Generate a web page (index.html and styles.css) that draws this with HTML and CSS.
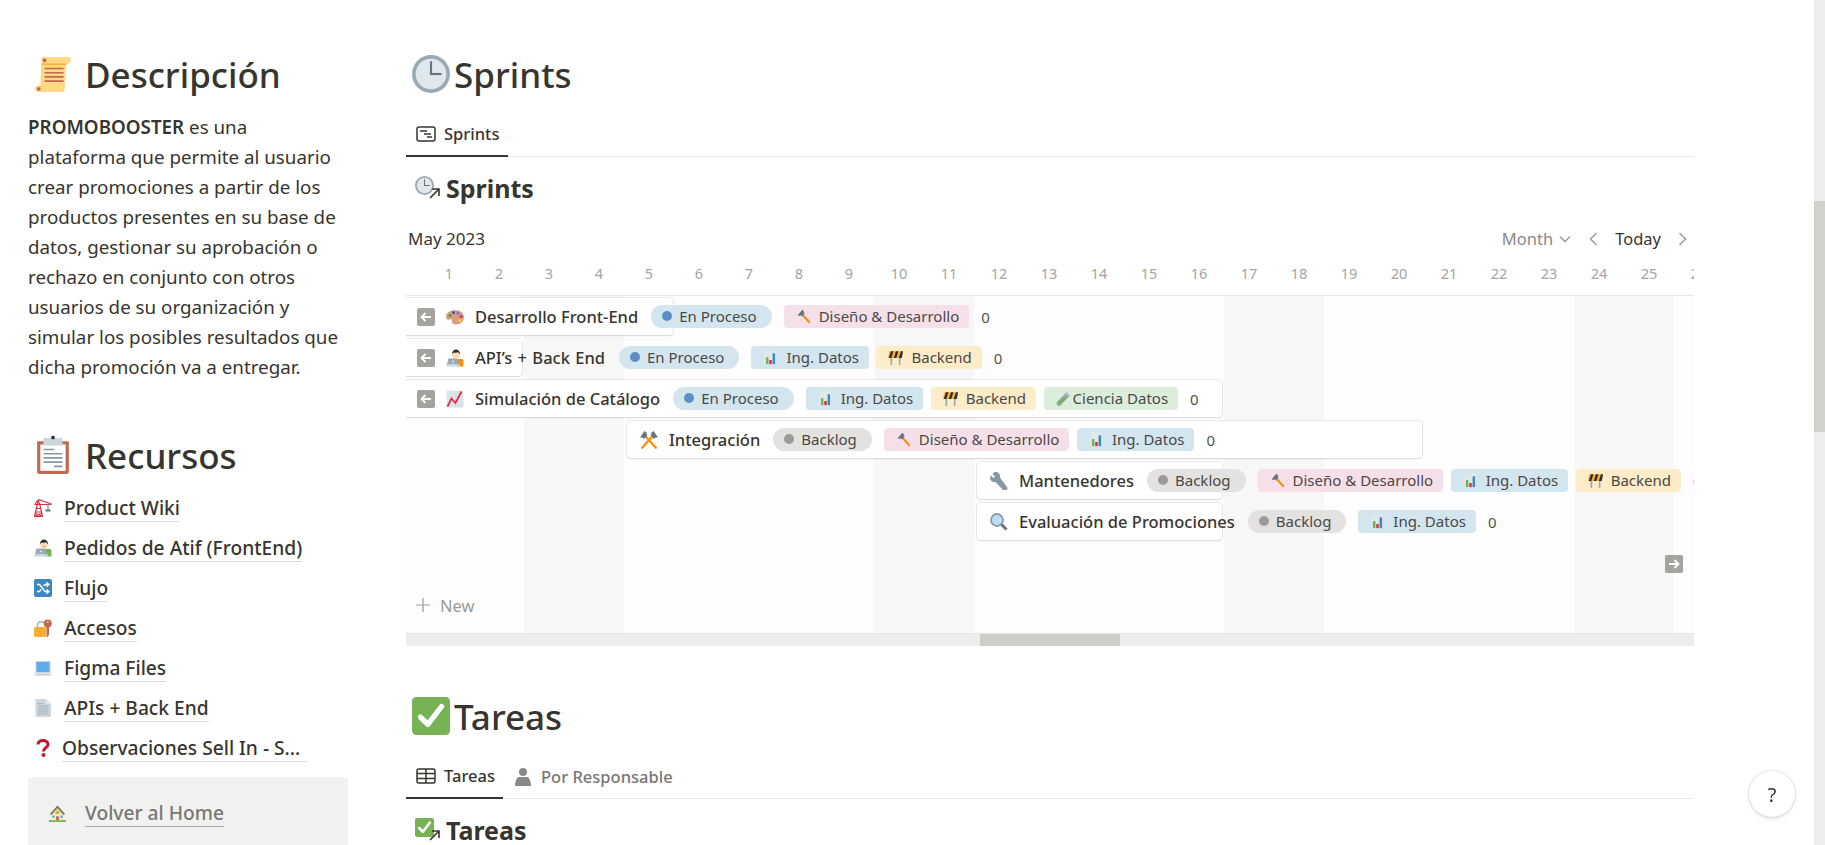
FILE: index.html
```html
<!DOCTYPE html>
<html lang="es">
<head>
<meta charset="utf-8">
<title>Promobooster</title>
<link rel="stylesheet" href="styles.css">
</head>
<body>
<svg class="sprite" xmlns="http://www.w3.org/2000/svg">
  <symbol id="i-scroll" viewBox="0 0 36 36">
    <path fill="#FFD983" d="M8 2h24a3 3 0 0 1 3 3c0 2-1.5 3-3 3h-1.5L29 32a3 3 0 0 1-3 3H4a3 3 0 0 1-3-3c0-2 1.5-3 3-3h2L7 5a3 3 0 0 1 1-3z"/>
    <path fill="#FFAC33" d="M8 8h23v1.5H8z"/>
    <path fill="#C1694F" d="M10 12h18v1.5H10zM10 16h18v1.5H10zM10 20h18v1.5H10zM10 24h18v1.5H10z"/>
    <circle cx="10" cy="5" r="1.8" fill="#C1694F"/><circle cx="4.5" cy="32" r="1.8" fill="#C1694F"/>
  </symbol>
  <symbol id="i-clip" viewBox="0 0 36 36">
    <path fill="#C1694F" d="M4 5h28a1 1 0 0 1 1 1v28a2 2 0 0 1-2 2H5a2 2 0 0 1-2-2V6a1 1 0 0 1 1-1z"/>
    <path fill="#fff" d="M6 8h24v25H6z"/>
    <path fill="#CCD6DD" d="M9 2h7a2 2 0 0 1 4 0h7v7H9z"/>
    <path fill="#292F33" d="M16.5 0h3v3h-3z"/>
    <path fill="#8899A6" d="M9 12h10v1.5H9zM9 16h18v1.5H9zM9 20h18v1.5H9zM9 24h18v1.5H9zM19 28h8v1.5h-8z"/>
  </symbol>
  <symbol id="i-crane" viewBox="0 0 36 36">
    <path fill="none" stroke="#DD2E44" stroke-width="2.4" d="M1 35 7 8h4l6 27M0 35h18M4 26h10M5 19h8M3 29l12 5M15 29 3 34M9 8V1M1 11h34M9 1 1 11M9 1l26 9"/>
    <path fill="#66757F" d="M27 11h2v10h-2zM23 21h10v4H23z"/>
  </symbol>
  <symbol id="i-dev" viewBox="0 0 36 36">
    <path fill="#77B255" d="M22 20h9a4 4 0 0 1 4 4v11H22z"/>
    <circle cx="20" cy="11" r="8" fill="#FFDCB3"/>
    <path fill="#292F33" d="M12 10c0-6 4-9 8-9s8 3 8 9c-2 0-3-3-4-4-3 2-8 2-9 1-1 1-2 3-3 3z"/>
    <path fill="#C1694F" d="M17 14h6v1h-6z"/>
    <path fill="#99AAB5" d="M6 19h16a2 2 0 0 1 2 2l2 10H2l2-10a2 2 0 0 1 2-2z"/>
    <path fill="#CCD6DD" d="M0 31h28v4H3a3 3 0 0 1-3-3z"/>
    <circle cx="14" cy="25" r="2" fill="#E1E8ED"/>
  </symbol>
  <symbol id="i-dev2" viewBox="0 0 36 36">
    <path fill="#F4900C" d="M22 20h9a4 4 0 0 1 4 4v11H22z"/>
    <circle cx="20" cy="11" r="8" fill="#FFDCB3"/>
    <path fill="#292F33" d="M12 10c0-6 4-9 8-9s8 3 8 9c-2 0-3-3-4-4-3 2-8 2-9 1-1 1-2 3-3 3z"/>
    <path fill="#99AAB5" d="M6 19h16a2 2 0 0 1 2 2l2 10H2l2-10a2 2 0 0 1 2-2z"/>
    <path fill="#CCD6DD" d="M0 31h28v4H3a3 3 0 0 1-3-3z"/>
    <circle cx="14" cy="25" r="2" fill="#E1E8ED"/>
  </symbol>
  <symbol id="i-shuffle" viewBox="0 0 36 36">
    <rect width="36" height="36" rx="4" fill="#3B88C3"/>
    <path fill="none" stroke="#fff" stroke-width="3" d="M6 11h5l11 14h4M6 25h5l3-4M19 14l3-3h4"/>
    <path fill="#fff" d="M25 5l7 6-7 6zM25 19l7 6-7 6z"/>
  </symbol>
  <symbol id="i-lock" viewBox="0 0 36 36">
    <path fill="none" stroke="#AAB8C2" stroke-width="3.5" d="M7 17v-4a8 8 0 0 1 16 0"/>
    <path fill="#FFAC33" d="M3 16h19a2 2 0 0 1 2 2v15a3 3 0 0 1-3 3H3a3 3 0 0 1-3-3V19a3 3 0 0 1 3-3z"/>
    <path fill="#C1694F" d="M25 15h5v16l-3 5h-2z"/>
    <circle cx="27.5" cy="9" r="8" fill="#C1694F"/>
    <circle cx="27.5" cy="6" r="2" fill="#FFCC99"/>
  </symbol>
  <symbol id="i-laptop" viewBox="0 0 36 36">
    <path fill="#CCD6DD" d="M5 4h26a2 2 0 0 1 2 2v22H3V6a2 2 0 0 1 2-2z"/>
    <path fill="#5DADEC" d="M5 6h26v20H5z"/>
    <path fill="#E1E8ED" d="M3 28h30l3 5a1 1 0 0 1-1 1H1a1 1 0 0 1-1-1z"/>
    <path fill="#99AAB5" d="M5 30h26v1H5z"/>
  </symbol>
  <symbol id="i-page" viewBox="0 0 36 36">
    <path fill="#CCD6DD" d="M4 0h20l10 10v23a3 3 0 0 1-3 3H6a3 3 0 0 1-3-3V1a1 1 0 0 1 1-1z"/>
    <path fill="#E1E8ED" d="M24 0v7a3 3 0 0 0 3 3h7z"/>
    <path fill="#99AAB5" d="M8 8h11v1.5H8zM8 13h21v1.5H8zM8 17h21v1.5H8zM8 21h21v1.5H8zM8 25h21v1.5H8zM8 29h21v1.5H8z"/>
  </symbol>
  <symbol id="i-q" viewBox="0 0 36 36">
    <path fill="none" stroke="#BE1931" stroke-width="6" d="M8 11c0-5 5-8 10-8s10 3 10 8c0 6-9 7-9 14"/>
    <circle cx="19" cy="32" r="4" fill="#BE1931"/>
  </symbol>
  <symbol id="i-house" viewBox="0 0 36 36">
    <path fill="#77B255" d="M0 32h36v4H0z"/>
    <path fill="#FFE8B6" d="M4 17h28v15H4z"/>
    <path fill="#66757F" d="M18 1 2 19l3 2L18 7l13 14 3-2z"/>
    <path fill="#FFCC4D" d="M18 7 8 18h20z"/>
    <path fill="#C1694F" d="M15 24h6v8h-6z"/>
    <path fill="#55ACEE" d="M7 22h5v5H7zM24 22h5v5h-5zM16 14h4v5h-4z"/>
  </symbol>
  <symbol id="i-clock" viewBox="0 0 36 36">
    <circle cx="18" cy="18" r="18" fill="#99AAB5"/>
    <circle cx="18" cy="18" r="14.5" fill="#E1E8ED"/>
    <path fill="#66757F" d="M17 6h2v13h-2z"/><path fill="#66757F" d="M17 17h11v2H17z"/>
  </symbol>
  <symbol id="i-tick" viewBox="0 0 36 36">
    <rect width="36" height="36" rx="4" fill="#77B255"/>
    <path fill="none" stroke="#fff" stroke-width="5" stroke-linecap="round" stroke-linejoin="round" d="M8 19l7 7L28 9"/>
  </symbol>
  <symbol id="i-palette" viewBox="0 0 36 36">
    <path fill="#D99E82" d="M18 4C8 4 0 10 0 18c0 5 4 6 7 5 3-1 6 0 5 3-1 5 4 7 9 7 9 0 15-7 15-15S28 4 18 4z"/>
    <circle cx="8" cy="15" r="3" fill="#5C913B"/><circle cx="15" cy="9" r="3" fill="#226699"/>
    <circle cx="24" cy="10" r="3" fill="#9266CC"/><circle cx="30" cy="17" r="3" fill="#DD2E44"/>
    <circle cx="28" cy="25" r="3" fill="#FFCC4D"/>
  </symbol>
  <symbol id="i-hammer" viewBox="0 0 36 36">
    <path fill="none" stroke="#F4900C" stroke-width="5" d="M14 12 33 33"/>
    <path fill="#66757F" d="M4 15 15 2l4 3-1 2 3 3-7 8-3-3-3 2z"/>
  </symbol>
  <symbol id="i-chart" viewBox="0 0 36 36">
    <path fill="#E1E8ED" d="M3 1h28v34H3z"/>
    <path fill="#77B255" d="M7 17h6v17H7z"/><path fill="#DD2E44" d="M15 24h6v10h-6z"/><path fill="#3B88C3" d="M23 8h6v26h-6z"/>
  </symbol>
  <symbol id="i-up" viewBox="0 0 36 36">
    <path fill="#E1E8ED" d="M1 1h34v34H1z"/>
    <path fill="none" stroke="#CCD6DD" stroke-width="1" d="M7 1v34M13 1v34M19 1v34M25 1v34M31 1v34M1 7h34M1 13h34M1 19h34M1 25h34M1 31h34"/>
    <path fill="none" stroke="#DD2E44" stroke-width="3.5" d="M3 33 11 17l8 9L31 3"/>
  </symbol>
  <symbol id="i-barrier" viewBox="0 0 36 36">
    <path fill="#99AAB5" d="M6 16h4v20H6zM26 16h4v20h-4z"/>
    <path fill="#FFAC33" d="M3 3h33l-3 16H0z"/>
    <path fill="#292F33" d="M7 3h6L8 19H2zM19 3h6l-5 16h-6zM31 3h5l-3 16h-7z"/>
  </symbol>
  <symbol id="i-tube" viewBox="0 0 36 36">
    <path fill="#99AAB5" d="M26 2l8 8L11 34a5 5 0 0 1-8-8z"/>
    <path fill="#77B255" d="M20 14l6 4L11 31a3 3 0 0 1-5-5z"/>
    <path fill="#CCD6DD" d="M24 1l11 11-2 2L22 3z"/>
  </symbol>
  <symbol id="i-picks" viewBox="0 0 36 36">
    <path fill="none" stroke="#F4900C" stroke-width="4.5" d="M8 7 33 35M28 7 3 35"/>
    <path fill="#66757F" d="M0 13 9 0l5 4-1 2 2 2-7 8-3-3zM36 13 27 0l-5 4 1 2-2 2 7 8 3-3z"/>
  </symbol>
  <symbol id="i-wrench" viewBox="0 0 36 36">
    <path fill="#8899A6" d="M9 0 5 4l5 5-3 3-5-5-2 3a9 9 0 0 0 11 10l14 15a5 5 0 0 0 9-5L20 11A9 9 0 0 0 9 0z"/>
  </symbol>
  <symbol id="i-lens" viewBox="0 0 36 36">
    <path fill="none" stroke="#66757F" stroke-width="6" d="M22 22l11 11"/>
    <circle cx="14" cy="14" r="12" fill="#BBDDF5" stroke="#8899A6" stroke-width="3.5"/>
  </symbol>
  <symbol id="i-back" viewBox="0 0 18 18">
    <rect width="18" height="18" rx="2" fill="#a5a39e"/>
    <path fill="none" stroke="#fff" stroke-width="1.8" d="M14 9H5M8.5 5 4.5 9l4 4"/>
  </symbol>
  <symbol id="i-next" viewBox="0 0 18 18">
    <rect width="18" height="18" rx="2" fill="#a5a39e"/>
    <path fill="none" stroke="#fff" stroke-width="1.8" d="M4 9h9M9.5 5l4 4-4 4"/>
  </symbol>
  <symbol id="i-timeline" viewBox="0 0 20 16">
    <rect x="1" y="1" width="18" height="14" rx="2" fill="none" stroke="#37352f" stroke-width="1.5"/>
    <path fill="none" stroke="#37352f" stroke-width="1.5" d="M4 5h7M8 8h7M11 11h5"/>
  </symbol>
  <symbol id="i-table" viewBox="0 0 20 16">
    <rect x="1" y="1" width="18" height="14" rx="2" fill="none" stroke="#37352f" stroke-width="1.5"/>
    <path fill="none" stroke="#37352f" stroke-width="1.5" d="M1 5.5h18M1 10.5h18M10 1v14"/>
  </symbol>
  <symbol id="i-person" viewBox="0 0 16 18">
    <circle cx="8" cy="4" r="4" fill="#8a8985"/>
    <path fill="#8a8985" d="M4 9h8c2 0 4 4 4 9H0c0-5 2-9 4-9z"/>
  </symbol>
  <symbol id="i-link" viewBox="0 0 12 12">
    <path fill="none" stroke="#37352f" stroke-width="1.6" d="M2 11 10.5 2.5M4 2h7v7"/>
  </symbol>
</svg>

<div class="page">
  <aside class="side">
    <h2 class="side-h"><svg class="side-h-icon"><use href="#i-scroll"/></svg>Descripción</h2>
    <p class="desc"><strong>PROMOBOOSTER</strong> es una plataforma que permite al usuario crear promociones a partir de los productos presentes en su base de datos, gestionar su aprobación o rechazo en conjunto con otros usuarios de su organización y simular los posibles resultados que dicha promoción va a entregar.</p>
    <h2 class="side-h side-h-second"><svg class="side-h-icon"><use href="#i-clip"/></svg>Recursos</h2>
    <ul class="links">
      <li><svg class="lk-icon"><use href="#i-crane"/></svg><a class="lk">Product Wiki</a></li>
      <li><svg class="lk-icon"><use href="#i-dev"/></svg><a class="lk">Pedidos de Atif (FrontEnd)</a></li>
      <li><svg class="lk-icon"><use href="#i-shuffle"/></svg><a class="lk">Flujo</a></li>
      <li><svg class="lk-icon"><use href="#i-lock"/></svg><a class="lk">Accesos</a></li>
      <li><svg class="lk-icon"><use href="#i-laptop"/></svg><a class="lk">Figma Files</a></li>
      <li><svg class="lk-icon"><use href="#i-page"/></svg><a class="lk">APIs + Back End</a></li>
      <li><svg class="lk-icon lk-icon-q"><use href="#i-q"/></svg><a class="lk lk-trail">Observaciones Sell In - S...</a></li>
    </ul>
    <div class="callout">
      <svg class="callout-icon"><use href="#i-house"/></svg><a class="callout-link">Volver al Home</a>
    </div>
  </aside>

  <main class="main">
    <h1 class="title"><svg class="title-icon"><use href="#i-clock"/></svg>Sprints</h1>
    <div class="tabs">
      <div class="tab tab-on tab-sprints"><svg class="tab-icon"><use href="#i-timeline"/></svg>Sprints</div>
    </div>
    <div class="db-title">
      <span class="db-icon"><svg class="db-icon-img"><use href="#i-clock"/></svg><svg class="db-link"><use href="#i-link"/></svg></span>Sprints
    </div>

    <div class="timeline">
      <div class="tl-bar">
        <span class="month">May 2023</span>
        <div class="tl-controls">
          <span class="tl-month">Month</span>
          <svg class="chev" viewBox="0 0 12 8"><path d="M1 1.5 6 6.5l5-5"/></svg>
          <svg class="nav-arrow nav-prev" viewBox="0 0 9 14"><path d="M7.5 1 1.5 7l6 6"/></svg>
          <span class="today">Today</span>
          <svg class="nav-arrow nav-next" viewBox="0 0 9 14"><path d="M1.5 1l6 6-6 6"/></svg>
        </div>
      </div>
      <div class="days">
        <span>1</span><span>2</span><span>3</span><span>4</span><span>5</span><span>6</span><span>7</span><span>8</span><span>9</span><span>10</span><span>11</span><span>12</span><span>13</span><span>14</span><span>15</span><span>16</span><span>17</span><span>18</span><span>19</span><span>20</span><span>21</span><span>22</span><span>23</span><span>24</span><span>25</span><span>26</span>
      </div>
      <div class="canvas">
        <i class="wknd wk-a"></i><i class="wknd wk-b"></i><i class="wknd wk-c"></i><i class="wknd wk-d"></i>

        <div class="item r1 c-1">
          <svg class="back"><use href="#i-back"/></svg>
          <svg class="em"><use href="#i-palette"/></svg>
          <span class="name">Desarrollo Front-End</span>
          <span class="pill status blue"><b class="dot d-blue"></b>En Proceso</span>
          <span class="tags">
            <span class="pill tag pink"><svg class="tg"><use href="#i-hammer"/></svg>Diseño &amp; Desarrollo</span>
          </span>
          <span class="count">0</span>
        </div>

        <div class="item r2 c-2">
          <svg class="back"><use href="#i-back"/></svg>
          <svg class="em"><use href="#i-dev2"/></svg>
          <span class="name name-wide">API’s + Back End</span>
          <span class="pill status blue"><b class="dot d-blue"></b>En Proceso</span>
          <span class="tags">
            <span class="pill tag blue"><svg class="tg"><use href="#i-chart"/></svg>Ing. Datos</span>
            <span class="pill tag amber"><svg class="tg"><use href="#i-barrier"/></svg>Backend</span>
          </span>
          <span class="count">0</span>
        </div>

        <div class="item r3 c-3">
          <svg class="back"><use href="#i-back"/></svg>
          <svg class="em"><use href="#i-up"/></svg>
          <span class="name">Simulación de Catálogo</span>
          <span class="pill status blue"><b class="dot d-blue"></b>En Proceso</span>
          <span class="tags">
            <span class="pill tag blue"><svg class="tg"><use href="#i-chart"/></svg>Ing. Datos</span>
            <span class="pill tag amber"><svg class="tg"><use href="#i-barrier"/></svg>Backend</span>
            <span class="pill tag green"><svg class="tg tg-tight"><use href="#i-tube"/></svg>Ciencia Datos</span>
          </span>
          <span class="count">0</span>
        </div>

        <div class="item r4 c-4">
          <svg class="em"><use href="#i-picks"/></svg>
          <span class="name">Integración</span>
          <span class="pill status grey"><b class="dot d-grey"></b>Backlog</span>
          <span class="tags">
            <span class="pill tag pink"><svg class="tg"><use href="#i-hammer"/></svg>Diseño &amp; Desarrollo</span>
            <span class="pill tag blue"><svg class="tg"><use href="#i-chart"/></svg>Ing. Datos</span>
          </span>
          <span class="count">0</span>
        </div>

        <div class="item r5 c-5">
          <svg class="em"><use href="#i-wrench"/></svg>
          <span class="name">Mantenedores</span>
          <span class="pill status grey"><b class="dot d-grey"></b>Backlog</span>
          <span class="tags">
            <span class="pill tag pink"><svg class="tg"><use href="#i-hammer"/></svg>Diseño &amp; Desarrollo</span>
            <span class="pill tag blue"><svg class="tg"><use href="#i-chart"/></svg>Ing. Datos</span>
            <span class="pill tag amber"><svg class="tg"><use href="#i-barrier"/></svg>Backend</span>
          </span>
          <span class="count">0</span>
        </div>

        <div class="item r6 c-5">
          <svg class="em"><use href="#i-lens"/></svg>
          <span class="name">Evaluación de Promociones</span>
          <span class="pill status grey"><b class="dot d-grey"></b>Backlog</span>
          <span class="tags">
            <span class="pill tag blue"><svg class="tg"><use href="#i-chart"/></svg>Ing. Datos</span>
          </span>
          <span class="count">0</span>
        </div>

        <div class="new-row">
          <svg class="plus" viewBox="0 0 14 14"><path d="M7 0v14M0 7h14"/></svg>New
        </div>
        <svg class="more"><use href="#i-next"/></svg>
      </div>
      <div class="hscroll"><div class="hthumb"></div></div>
    </div>

    <h1 class="title title-second"><svg class="title-icon"><use href="#i-tick"/></svg>Tareas</h1>
    <div class="tabs">
      <div class="tab tab-on tab-tareas"><svg class="tab-icon"><use href="#i-table"/></svg>Tareas</div>
      <div class="tab tab-off"><svg class="person"><use href="#i-person"/></svg>Por Responsable</div>
    </div>
    <div class="db-title">
      <span class="db-icon"><svg class="db-icon-img"><use href="#i-tick"/></svg><svg class="db-link"><use href="#i-link"/></svg></span>Tareas
    </div>
  </main>
</div>

<div class="vscroll"><div class="vthumb"></div></div>
<div class="help">?</div>
</body>
</html>
```

FILE: styles.css
```css
* { box-sizing: border-box; }
html, body { margin: 0; height: 100%; overflow: hidden; background: #fff; }
body {
  font-family: "Noto Sans", "Open Sans", "Liberation Sans", sans-serif;
  color: #37352f;
}
.sprite { display: none; }
svg { display: block; flex: none; }

.page {
  display: flex;
  gap: 58px;
  padding-left: 28px;
  height: 845px;
  overflow: hidden;
}

/* left column */
.side { width: 320px; flex: none; padding-top: 48px; }
.side-h {
  display: flex;
  align-items: center;
  margin: 0;
  height: 52px;
  font-size: 35px;
  font-weight: 500;
}
.side-h-icon { width: 38px; height: 38px; margin: 0 13px 0 6px; }
.side-h-second { margin-top: 47px; }
.desc {
  margin: 12px 0 0;
  font-size: 18.8px;
  line-height: 30px;
  width: 312px;
}
.desc strong { font-weight: 600; }
.links { list-style: none; margin: 7px 0 0; padding: 0; }
.links li { display: flex; align-items: center; height: 40px; }
.lk-icon { width: 18px; height: 18px; margin: 0 12px 0 6px; }
.lk-icon-q { margin-right: 10px; }
.lk {
  font-size: 19.2px;
  font-weight: 500;
  line-height: 26px;
  border-bottom: 1px solid #dcdcda;
  white-space: nowrap;
}
.lk-trail { padding-right: 8px; }
.callout {
  display: flex;
  align-items: center;
  margin-top: 9px;
  height: 80px;
  padding: 0 0 8px 21px;
  background: #f1f1ef;
  border-radius: 4px 4px 0 0;
}
.callout-icon { width: 17px; height: 17px; margin-right: 19px; }
.callout-link {
  font-size: 19.2px;
  font-weight: 500;
  line-height: 26px;
  color: #787774;
  border-bottom: 1px solid #aeadaa;
}

/* right column */
.main { width: 1288px; flex: none; padding-top: 50px; }
.title {
  display: flex;
  align-items: center;
  margin: 0;
  height: 48px;
  padding-left: 6px;
  font-size: 35px;
  font-weight: 500;
}
.title-icon { width: 38px; height: 38px; margin-right: 4px; }
.title-second { margin-top: 46px; }
.tabs {
  display: flex;
  align-items: stretch;
  margin-top: 12px;
  height: 47px;
  border-bottom: 1px solid #e9e9e7;
}
.tab {
  display: flex;
  align-items: center;
  font-size: 16.5px;
  font-weight: 500;
  padding: 2px 10px 0;
  margin-bottom: -1px;
}
.tab-on { border-bottom: 2px solid #37352f; }
.tab-sprints { width: 102px; }
.tab-tareas { width: 97px; }
.tab-off { color: #787774; padding-left: 12px; }
.tab-icon { width: 20px; height: 16px; margin-right: 8px; }
.person { width: 16px; height: 18px; margin-right: 10px; }

.db-title {
  display: flex;
  align-items: center;
  height: 64px;
  padding: 0 0 2px 9px;
  font-size: 25px;
  font-weight: 700;
}
.db-icon { position: relative; width: 31px; height: 26px; flex: none; }
.db-icon-img { width: 19px; height: 19px; margin-top: 1px; }
.db-link { position: absolute; left: 13px; top: 12px; width: 12px; height: 12px; }

.timeline { width: 1288px; }
.tl-bar {
  display: flex;
  justify-content: space-between;
  align-items: center;
  height: 35px;
}
.month { padding-left: 2px; font-size: 17px; }
.tl-controls { display: flex; align-items: center; padding-right: 7px; font-size: 16.5px; }
.tl-month { color: #8a8a86; }
.today { margin: 0 17px; }
.chev { width: 12px; height: 8px; margin: 0 18px 0 6px; }
.nav-arrow { width: 9px; height: 14px; }
.chev path, .nav-arrow path { fill: none; stroke: #9b9a97; stroke-width: 1.5; }

.days {
  display: grid;
  grid-template-columns: repeat(26, 50px);
  align-items: center;
  height: 39px;
  margin-left: 18px;
  padding-bottom: 6px;
  overflow: hidden;
  font-size: 14.5px;
  color: #a5a49f;
  text-align: center;
}
.canvas {
  position: relative;
  display: grid;
  grid-template-columns: 18px repeat(26, 50px);
  grid-template-rows: repeat(6, 41px) 1fr;
  height: 338px;
  overflow: hidden;
  background: #fdfdfd;
  border-top: 1px solid #e9e9e7;
}
.wknd { grid-row: 1 / -1; background: #f7f7f7; }
.wk-a { grid-column: 4 / 6; }
.wk-b { grid-column: 11 / 13; }
.wk-c { grid-column: 18 / 20; }
.wk-d { grid-column: 25 / 27; }

.item {
  display: flex;
  align-items: center;
  height: 37px;
  margin: 2px 0 0 3px;
  padding-left: 13px;
  background: #fff;
  border-radius: 4px;
  box-shadow: 0 0 0 1px rgba(55, 53, 47, .09), 0 1px 2px rgba(55, 53, 47, .1);
  white-space: nowrap;
  z-index: 1;
}
.r1 { grid-row: 1; } .r2 { grid-row: 2; } .r3 { grid-row: 3; }
.r4 { grid-row: 4; } .r5 { grid-row: 5; } .r6 { grid-row: 6; }
.c-1 { grid-column: 1 / 7; margin-left: -6px; margin-right: 1px; padding-left: 17px; }
.c-2 { grid-column: 1 / 4; margin-left: -6px; margin-right: 2px; padding-left: 17px; }
.c-3 { grid-column: 1 / 18; margin-left: -6px; margin-right: 2px; padding-left: 17px; }
.c-4 { grid-column: 6 / 22; margin-right: 2px; }
.c-5 { grid-column: 13 / 18; margin-right: 2px; }

.back { width: 18px; height: 18px; margin-right: 11px; }
.em { width: 18px; height: 18px; margin-right: 11px; }
.name { font-size: 16.5px; font-weight: 500; margin-right: 13px; }
.name-wide { word-spacing: 1px; margin-right: 14px; }
.pill {
  display: flex;
  align-items: center;
  height: 23px;
  margin-top: -1px;
  font-size: 15px;
  color: #4a4945;
}
.status { border-radius: 12px; padding: 0 15px 0 11px; }
.tag { border-radius: 4px; padding: 0 10px 0 12px; }
.tags { display: flex; gap: 7.5px; margin-left: 12px; }
.blue { background: #d3e5ef; }
.grey { background: #e3e2e0; }
.pink { background: #f5e0e9; }
.amber { background: #fdecc8; }
.green { background: #dbeddb; }
.dot { width: 10px; height: 10px; border-radius: 50%; margin-right: 7px; }
.d-blue { background: #5b8fc4; }
.d-grey { background: #9b9a97; }
.tg { width: 15px; height: 15px; margin-right: 8px; }
.tg-tight { margin-right: 2px; }
.count { margin-left: 12px; font-size: 15px; color: #55534e; }

.new-row {
  grid-row: 7;
  grid-column: 1 / 6;
  align-self: end;
  display: flex;
  align-items: center;
  height: 50px;
  padding: 0 0 6px 10px;
  font-size: 16.5px;
  color: #9b9a97;
  z-index: 1;
}
.plus { width: 14px; height: 14px; margin-right: 10px; }
.plus path { fill: none; stroke: #9b9a97; stroke-width: 1.2; }
.more { position: absolute; left: 1259px; top: 259px; width: 18px; height: 18px; z-index: 2; }

.hscroll { height: 13px; background: #ededeb; border-top: 1px solid #e6e6e3; }
.hthumb { width: 140px; height: 12px; margin-left: 574px; background: #cfcec8; }

.vscroll { position: fixed; right: 0; top: 0; width: 11px; height: 845px; background: #ededeb; }
.vthumb { height: 231px; margin-top: 201px; background: #d3d1cb; }
.help {
  position: fixed;
  left: 1749px;
  top: 771px;
  display: flex;
  align-items: center;
  justify-content: center;
  width: 46px;
  height: 46px;
  border-radius: 50%;
  background: #fff;
  font-size: 20px;
  box-shadow: 0 0 0 1px rgba(55, 53, 47, .1), 0 2px 4px rgba(55, 53, 47, .12);
}
```
